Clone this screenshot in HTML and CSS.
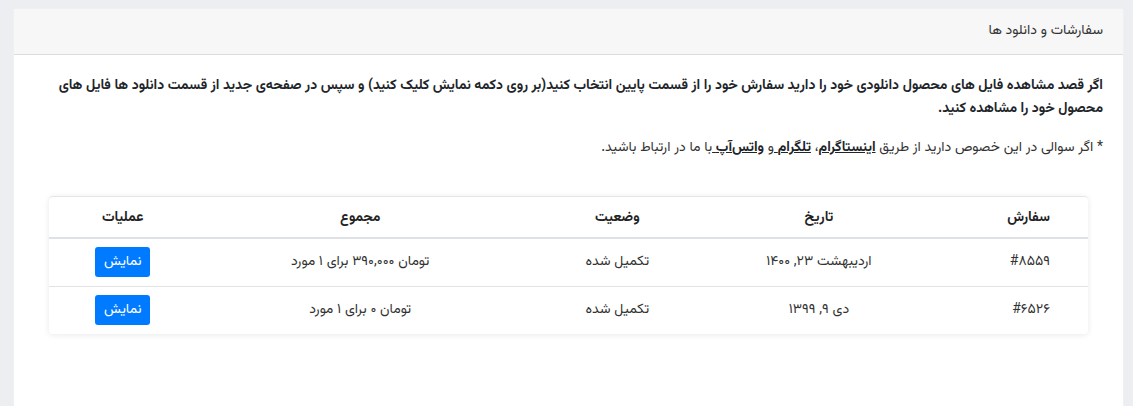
FILE: index.html
```html
<!DOCTYPE html>
<html lang="fa" dir="rtl">
<head>
    <meta charset="UTF-8">
    <meta name="viewport" content="width=device-width, initial-scale=1.0">
    <title>سفارشات و دانلود ها</title>
    <link rel="stylesheet" href="styles.css">
</head>
<body>

    <div class="card">
        <div class="card-header">سفارشات و دانلود ها</div>

        <div class="card-body">
            <p class="lead-note">اگر قصد مشاهده فایل های محصول دانلودی خود را دارید سفارش خود را از قسمت پایین انتخاب کنید(بر روی دکمه نمایش کلیک کنید) و سپس در صفحه‌ی جدید از قسمت دانلود ها فایل های محصول خود را مشاهده کنید.</p>

            <p class="contact-note">* اگر سوالی در این خصوص دارید از طریق <a href="#"><strong>اینستاگرام</strong></a>، <a href="#"><strong>تلگرام</strong> </a>و <a href="#"><strong>واتس‌آپ</strong> </a>با ما در ارتباط باشید.</p>

            <!-- orders table -->
            <div class="orders">
                <table>
                    <thead>
                        <tr>
                            <th class="col-id">سفارش</th>
                            <th class="col-date">تاریخ</th>
                            <th class="col-status">وضعیت</th>
                            <th class="col-total">مجموع</th>
                            <th class="col-actions">عملیات</th>
                        </tr>
                    </thead>
                    <tbody>
                        <tr>
                            <td class="col-id">#۸۵۵۹</td>
                            <td>اردیبهشت ۲۳, ۱۴۰۰</td>
                            <td>تکمیل شده</td>
                            <td>تومان ۳۹۰,۰۰۰ برای ۱ مورد</td>
                            <td><a href="#" class="btn">نمایش</a></td>
                        </tr>
                        <tr>
                            <td class="col-id">#۶۵۲۶</td>
                            <td>دی ۹, ۱۳۹۹</td>
                            <td>تکمیل شده</td>
                            <td>تومان ۰ برای ۱ مورد</td>
                            <td><a href="#" class="btn">نمایش</a></td>
                        </tr>
                    </tbody>
                </table>
            </div>
        </div>
    </div>

</body>
</html>
```

FILE: styles.css
```css
* {
    box-sizing: border-box;
}

body {
    margin: 0;
    padding: 8px 9px 0 13px;
    background-color: #eceef1;
    font-family: "Vazirmatn", "Vazir", "Noto Sans Arabic", "Noto Naskh Arabic", "DejaVu Sans", sans-serif;
    font-size: 14px;
    color: #212529;
    overflow: hidden;
}

.card {
    background: #fff;
    border: 1px solid rgba(0, 0, 0, 0.06);
    border-radius: 3px;
    min-height: 430px;
}

.card-header {
    background-color: #f7f7f7;
    border-bottom: 1px solid #dcdcdc;
    padding: 11px 20px 12px;
    line-height: 22px;
    color: #333;
}

.card-body {
    padding: 20px;
}

.card-body p {
    margin: 0 0 16px;
    line-height: 23px;
}

.lead-note {
    font-weight: bold;
}

.contact-note {
    color: #333;
}

.contact-note a {
    color: #212529;
    text-decoration: underline;
}

/* orders table */
.orders {
    margin: 36px 15px 0;
    border-radius: 4px;
    box-shadow: 0 1px 6px rgba(0, 0, 0, 0.09);
    border-top: 1px solid #e6e6e6;
}

.orders table {
    width: 100%;
    border-collapse: collapse;
    table-layout: fixed;
}

.orders th,
.orders td {
    text-align: center;
    padding: 8px 12px;
    line-height: 18px;
    border-top: 1px solid #e2e2e2;
    white-space: nowrap;
}

.orders th {
    border-top: 0;
    border-bottom: 2px solid #dee2e6;
    padding: 12px 12px 10px;
    color: #222;
}

.orders td {
    height: 48px;
    color: #333;
}

.orders tbody tr:first-child td {
    border-top: 0;
}

.orders .col-id {
    text-align: right;
    padding-right: 38px;
    width: 15.5%;
}

.col-date {
    width: 20.8%;
}

.col-status {
    width: 18%;
}

.col-total {
    width: 31.5%;
}

.col-actions {
    width: 14.2%;
}

.btn {
    display: inline-block;
    background-color: #007bff;
    color: #fff;
    text-decoration: none;
    border-radius: 3px;
    padding: 6px 9px;
    line-height: 18px;
    font-size: 14px;
}
```
